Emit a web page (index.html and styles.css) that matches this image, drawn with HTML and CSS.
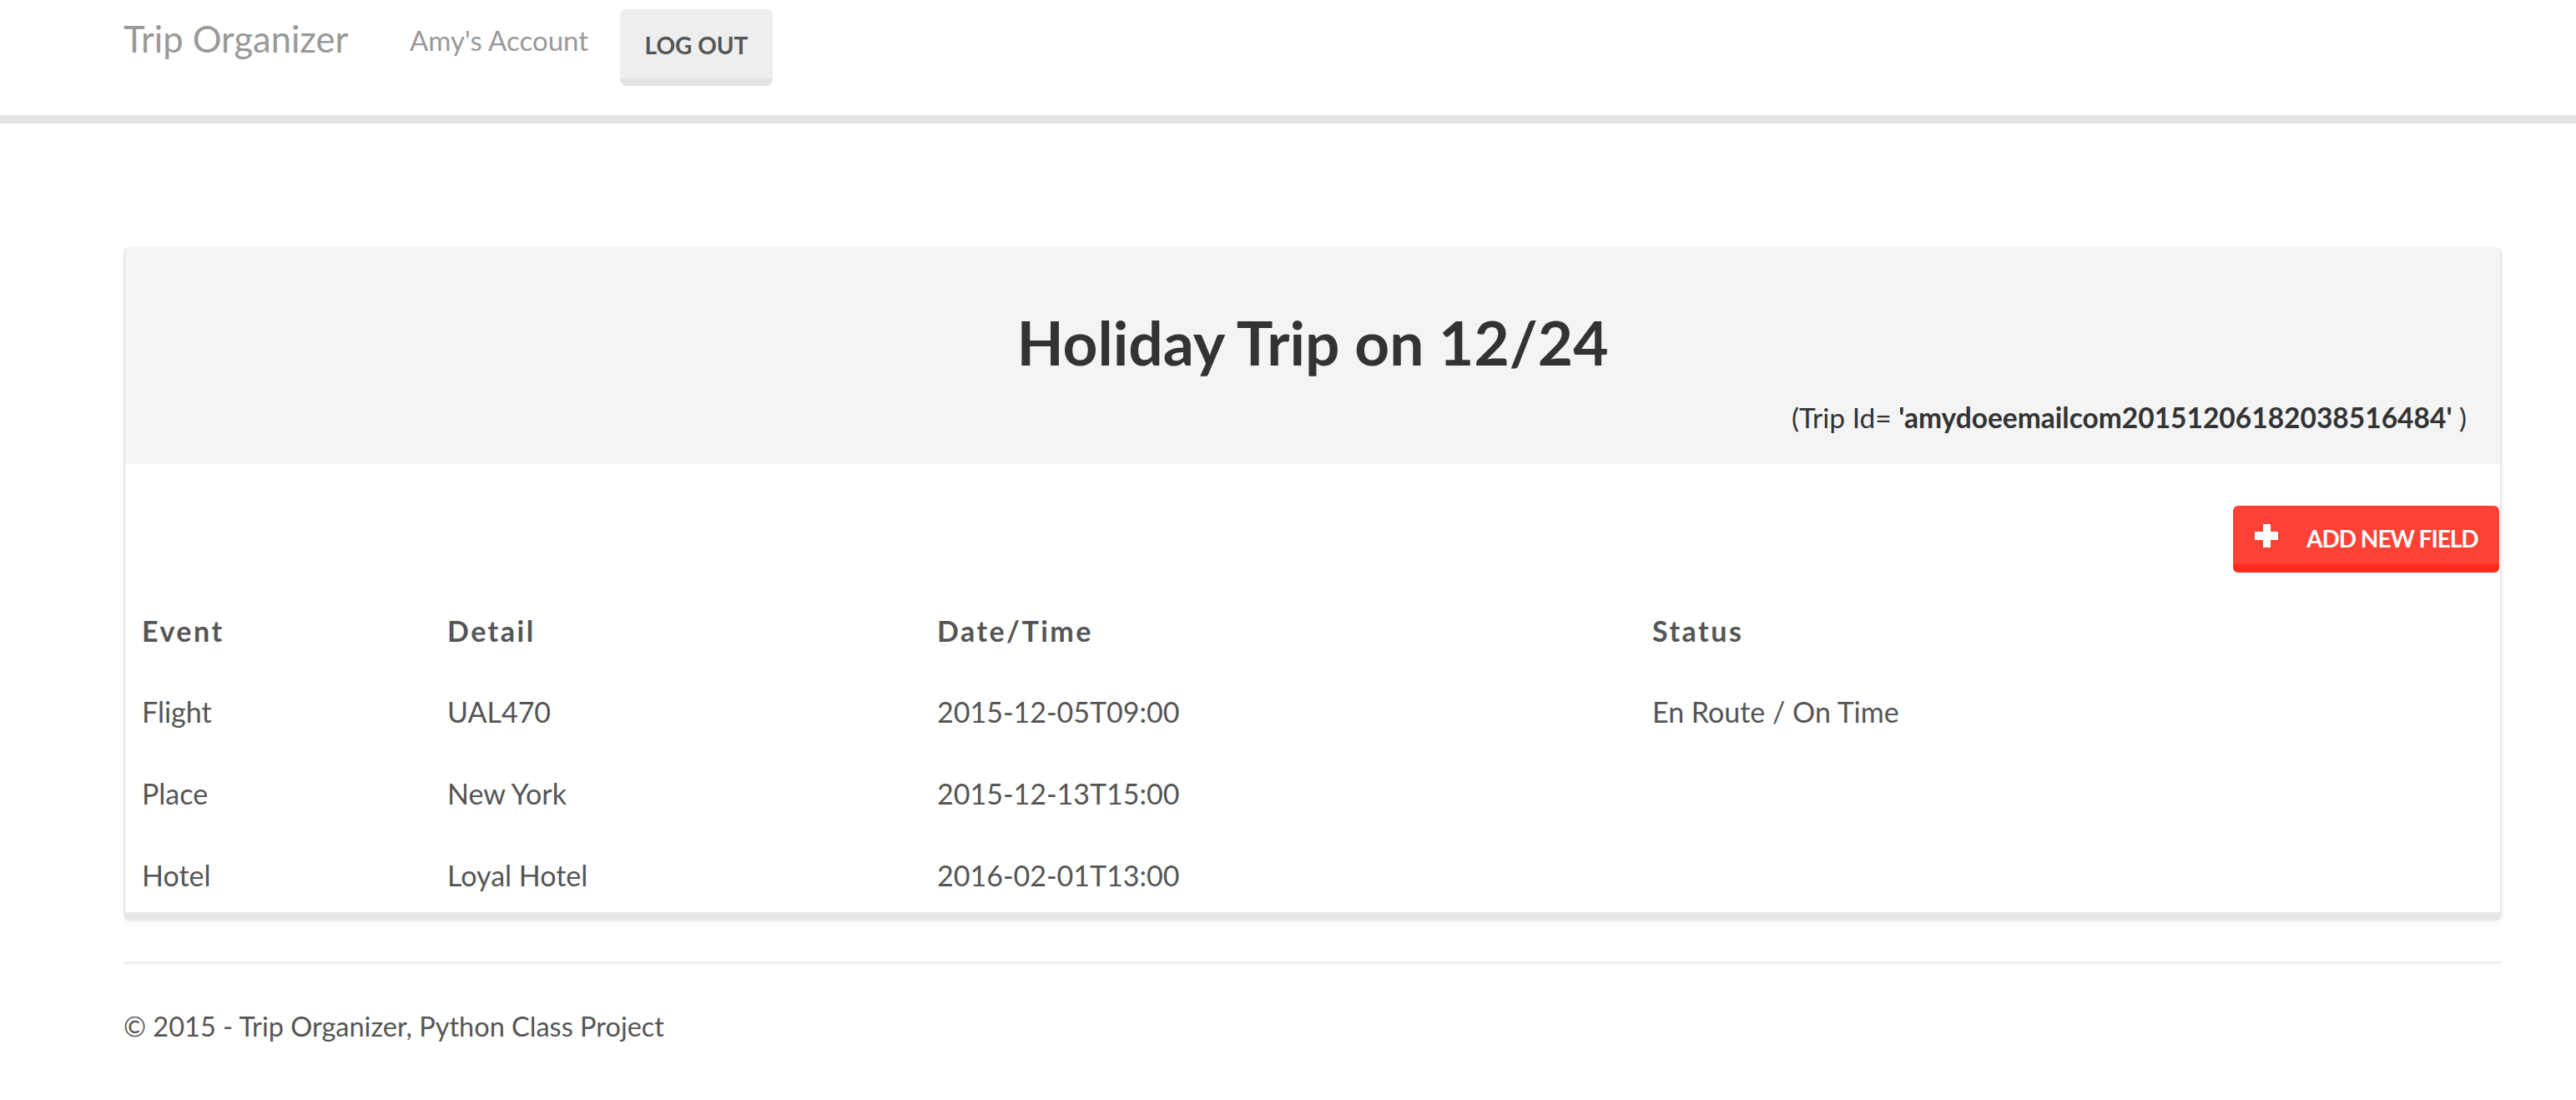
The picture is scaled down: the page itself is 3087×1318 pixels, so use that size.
FILE: index.html
```html
<!DOCTYPE html>
<html lang="en">
<head>
<meta charset="utf-8">
<title>Trip Organizer</title>
<link rel="stylesheet" href="styles.css">
</head>
<body>
<nav class="navbar">
  <div class="nav-inner">
    <a class="brand" href="#">Trip Organizer</a>
    <a class="account" href="#">Amy's Account</a>
    <button class="btn btn-logout" type="button">Log out</button>
  </div>
</nav>

<main class="container">
  <section class="panel">
    <header class="panel-heading">
      <h2 class="trip-title">Holiday Trip on 12/24</h2>
      <p class="trip-id">(Trip Id= <strong>'amydoeemailcom20151206182038516484'</strong> )</p>
    </header>
    <div class="panel-body">
      <div class="actions">
        <button class="btn btn-danger" type="button">
          <svg class="plus" width="28" height="28" viewBox="0 0 28 28" aria-hidden="true"><rect x="0" y="9" width="28" height="10" fill="#fff"/><rect x="10" y="0" width="9" height="28" fill="#fff"/></svg>
          <span>Add new field</span>
        </button>
      </div>
    </div>
    <table class="table">
      <colgroup>
        <col class="c1"><col class="c2"><col class="c3"><col class="c4">
      </colgroup>
      <thead>
        <tr><th>Event</th><th>Detail</th><th>Date/Time</th><th>Status</th></tr>
      </thead>
      <tbody>
        <tr><td>Flight</td><td>UAL470</td><td>2015-12-05T09:00</td><td>En Route / On Time</td></tr>
        <tr><td>Place</td><td>New York</td><td>2015-12-13T15:00</td><td></td></tr>
        <tr><td>Hotel</td><td>Loyal Hotel</td><td>2016-02-01T13:00</td><td></td></tr>
      </tbody>
    </table>
  </section>
  <hr class="rule">
  <footer class="footer">© 2015 - Trip Organizer, Python Class Project</footer>
</main>
</body>
</html>
```

FILE: styles.css
```css
* { box-sizing: border-box; }
html, body { margin: 0; padding: 0; background: #fff; }
body {
  font-family: Lato, "Open Sans", sans-serif;
  color: #555;
  width: 3087px;
  min-height: 1318px;
}

/* navbar */
.navbar {
  height: 148px;
  background: #fff;
  border-bottom: 10px solid #e4e4e4;
}
.nav-inner {
  display: flex;
  align-items: flex-start;
  padding-left: 148px;
}
.brand {
  width: 343px;
  font-size: 43.5px;
  line-height: 50px;
  margin-top: 21px;
  color: #999;
  text-decoration: none;
}
.account {
  width: 252px;
  font-size: 33px;
  line-height: 37px;
  margin-top: 30px;
  color: #999;
  text-decoration: none;
}
.btn {
  font-family: Lato, "Open Sans", sans-serif;
  font-weight: 700;
  text-transform: uppercase;
  cursor: pointer;
}
.btn-logout {
  margin-top: 11px;
  width: 183px;
  height: 92px;
  padding: 26px 0 0;
  background: #eeeeee;
  border: 0;
  border-bottom: 9px solid #e2e2e2;
  border-radius: 8px;
  color: #555;
  font-size: 28px;
  line-height: 34px;
  display: flex;
  align-items: flex-start;
  justify-content: center;
}

/* container */
.container {
  padding: 148px 89px 0 148px;
}
.panel {
  width: 2850px;
  background: #fff;
  border: 0 solid #e7e7e7;
  border-width: 0 2px 10px 2px;
  border-radius: 8px;
  box-shadow: 0 3px 6px rgba(0, 0, 0, 0.05);
  overflow: hidden;
}
.panel-heading {
  background: #f4f4f4;
  padding: 73px 40px 34px;
  height: 260px;
  color: #333;
}
.trip-title {
  margin: 0;
  text-align: center;
  font-size: 73px;
  line-height: 82px;
  font-weight: 700;
  color: #333;
}
.trip-id {
  margin: 31px 0 0;
  text-align: right;
  font-size: 33.5px;
  line-height: 37px;
  color: #333;
}
.trip-id strong { font-weight: 700; }

.panel-body {
  padding-top: 50px;
}
.actions {
  display: flex;
  justify-content: flex-end;
  padding-right: 1px;
}
.btn-danger {
  width: 319px;
  height: 80px;
  display: flex;
  align-items: flex-start;
  gap: 34px;
  padding: 22px 0 0 26px;
  background: #ff4136;
  border: 0;
  border-bottom: 10px solid #ff291d;
  border-radius: 6px;
  color: #fff;
  font-size: 28px;
  line-height: 34px;
  letter-spacing: -1px;
}
.plus { flex: none; display: block; }

.table {
  width: 100%;
  margin-top: 16.5px;
  border-collapse: collapse;
  table-layout: fixed;
  font-size: 34px;
  line-height: 37px;
  color: #555;
}
.c1 { width: 366px; }
.c2 { width: 587px; }
.c3 { width: 857px; }
.table th,
.table td {
  text-align: left;
  padding: 34px 20px 26.7px;
  vertical-align: top;
  white-space: nowrap;
}
.table th {
  font-weight: 700;
  letter-spacing: 2.5px;
}

.rule {
  width: 2850px;
  margin: 49px 0 0;
  border: 0;
  border-top: 3px solid #eeeeee;
  height: 0;
}
.footer {
  margin-top: 56px;
  font-size: 32.5px;
  line-height: 37px;
  color: #555;
}
```
